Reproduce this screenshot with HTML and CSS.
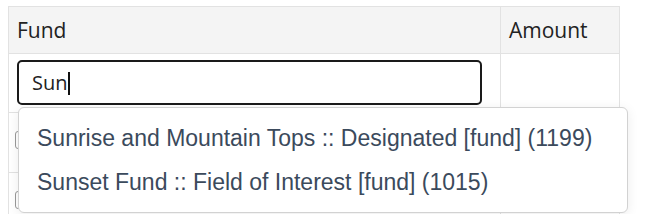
FILE: index.html
```html
<!DOCTYPE html>
<html>
<head>
    <title>Fund Allocation</title>
    <link rel="stylesheet" href="styles.css">
</head>
<body>
    <div class="wrap">
        <table class="alloc">
            <thead>
                <tr>
                    <th class="col-fund">Fund</th>
                    <th class="col-amount">Amount</th>
                </tr>
            </thead>
            <tbody>
                <tr class="edit-row">
                    <td>
                        <div class="fund-input">Sun<span class="caret"></span></div>
                    </td>
                    <td></td>
                </tr>
                <tr class="row">
                    <td><span class="stub"></span></td>
                    <td></td>
                </tr>
                <tr class="row">
                    <td><span class="stub"></span></td>
                    <td></td>
                </tr>
            </tbody>
        </table>

        <ul class="suggest">
            <li>Sunrise and Mountain Tops :: Designated [fund] (1199)</li>
            <li>Sunset Fund :: Field of Interest [fund] (1015)</li>
        </ul>
    </div>
</body>
</html>
```

FILE: styles.css
```css
body {
    margin: 0;
    padding: 6px 0 0 8px;
    background: #fff;
    font-family: "Open Sans", "Noto Sans", sans-serif;
    color: #222;
    overflow: hidden;
}
.wrap {
    position: relative;
}
.alloc {
    border-collapse: collapse;
    width: 612px;
}
.alloc th,
.alloc td {
    border: 1px solid #e2e2e2;
    padding: 0 8px;
    text-align: left;
}
.alloc th {
    background: #f4f4f4;
    font-weight: normal;
    font-size: 21px;
    height: 46px;
}
.col-fund {
    width: 475px;
}
.col-amount {
    padding-left: 11px;
}
.edit-row td {
    height: 52px;
    padding-top: 6px;
    vertical-align: top;
}
.fund-input {
    box-sizing: border-box;
    width: 465px;
    height: 45px;
    border: 2px solid #1a1a1a;
    border-radius: 5px;
    padding: 0 13px;
    font-size: 20px;
    line-height: 41px;
}
.caret {
    display: inline-block;
    width: 2px;
    height: 23px;
    background: #111;
    vertical-align: -5px;
}
.row td {
    height: 59px;
}
.stub {
    display: inline-block;
    width: 14px;
    height: 16px;
    border: 1px solid #999;
    border-radius: 3px;
    margin-left: -2px;
}
.suggest {
    position: absolute;
    top: 101px;
    left: 10px;
    width: 608px;
    margin: 0;
    padding: 8px 0;
    list-style: none;
    background: #fff;
    border: 1px solid #d2d2d2;
    border-radius: 6px;
    box-shadow: 0 2px 12px rgba(0, 0, 0, 0.08);
    font-family: "Liberation Sans", Arial, sans-serif;
    font-size: 23px;
    color: #3b4a5c;
}
.suggest li {
    padding: 0 18px;
    line-height: 44px;
}
```
